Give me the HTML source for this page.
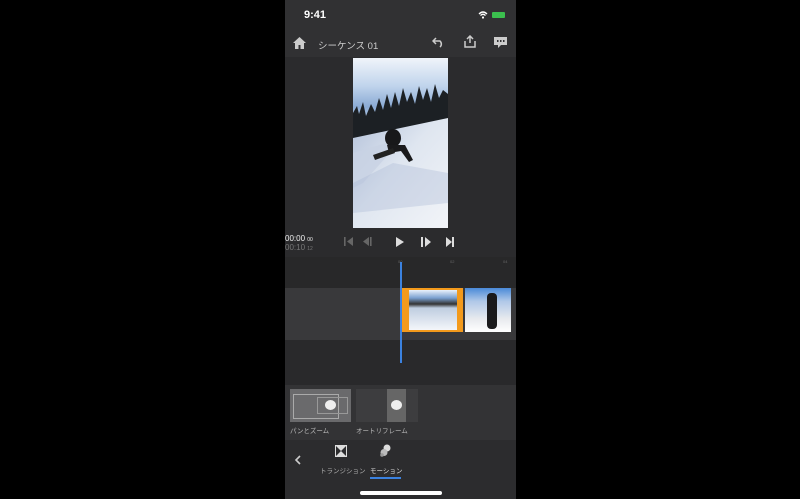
<!DOCTYPE html>
<html><head><meta charset="utf-8"><style>
body{margin:0;width:800px;height:499px;background:#000;position:relative;overflow:hidden;font-family:"Liberation Sans","Noto Sans CJK JP",sans-serif;}
.ph{position:absolute;left:285px;top:0;width:231px;height:499px;background:#2b2b2d;overflow:hidden;}
.a{position:absolute;}
.t{color:#ddd;font-size:8px;white-space:nowrap;}
</style></head><body>
<div class="ph">
 <div class="a" style="left:0;top:0;width:231px;height:57px;background:#313133"></div>
 <div class="a t" style="left:19px;top:9px;font-size:11px;font-weight:bold;color:#fff">9:41</div>
 <svg class="a" style="left:193px;top:11px" width="10" height="8" viewBox="0 0 10 8"><path d="M1 3Q5 -1 9 3M2.5 4.5Q5 2 7.5 4.5" stroke="#fff" stroke-width="1.3" fill="none"/><circle cx="5" cy="6.5" r="1.1" fill="#fff"/></svg>
 <div class="a" style="left:207px;top:12px;width:13px;height:6px;background:#3bbf4e;border-radius:1px"></div>
 <svg class="a" style="left:8px;top:37px" width="13" height="12" viewBox="0 0 13 12"><path d="M6.5 0L0 6h2v6h3.5V8h2v4H11V6h2z" fill="#ccc"/></svg>
 <div class="a t" style="left:33px;top:38px;font-size:9.5px;color:#ccc">シーケンス 01</div>
 <svg class="a" style="left:147px;top:37px" width="14" height="13" viewBox="0 0 14 13"><path d="M4 1L1 4l3 3M1 4h7a4 4 0 0 1 0 6" stroke="#ccc" stroke-width="1.5" fill="none"/></svg>
 <svg class="a" style="left:179px;top:35px" width="12" height="13" viewBox="0 0 12 13"><path d="M6 8V1M3 4l3-3 3 3M1 6v6h10V6" stroke="#ccc" stroke-width="1.5" fill="none"/></svg>
 <svg class="a" style="left:209px;top:37px" width="13" height="11" viewBox="0 0 13 11"><path d="M0 0h13v8H7l-3 3V8H0z" fill="#ccc"/><rect x="3" y="3" width="1.5" height="2" fill="#313133"/><rect x="6" y="3" width="1.5" height="2" fill="#313133"/><rect x="9" y="3" width="1.5" height="2" fill="#313133"/></svg>
 <svg class="a" style="left:68px;top:58px" width="95" height="170" viewBox="0 0 95 170">
  <defs>
   <linearGradient id="sky" x1="0" y1="0" x2="0" y2="1"><stop offset="0" stop-color="#f0f4fa"/><stop offset=".4" stop-color="#c0d4ec"/><stop offset=".7" stop-color="#8aaad4"/><stop offset="1" stop-color="#d4e0ee"/></linearGradient>
   <linearGradient id="snow" x1="0" y1="0" x2="1" y2="1"><stop offset="0" stop-color="#b4c2da"/><stop offset=".45" stop-color="#dfe6f0"/><stop offset="1" stop-color="#f2f4f8"/></linearGradient>
  </defs>
  <rect width="95" height="70" fill="url(#sky)"/>
  <path d="M0 55 L4 48 L6 56 L10 44 L13 58 L18 46 L22 54 L26 40 L30 52 L34 36 L38 50 L42 34 L46 48 L50 30 L54 44 L58 34 L62 46 L66 28 L70 42 L74 30 L78 44 L82 26 L86 40 L90 32 L95 36 L95 70 L0 90Z" fill="#1c2024"/>
  <path d="M0 80 L95 60 L95 170 L0 170Z" fill="url(#snow)"/>
  <path d="M0 95 L50 80 L10 125 L0 130Z" fill="#c8d2e4" opacity=".8"/>
  <path d="M0 125 L40 105 L95 115 L95 145 L0 155Z" fill="#a8b8d4" opacity=".35"/>
  <ellipse cx="40" cy="80" rx="8" ry="9" fill="#18181a"/>
  <path d="M34 87 L52 87 L60 102 L56 104 L48 93 L36 95Z" fill="#1a1a1c"/>
  <path d="M20 97 L40 90 L42 95 L22 102Z" fill="#222"/>
 </svg>
 <div class="a t" style="left:0;top:234px;color:#eee">00:00 <span style="font-size:5px">00</span></div>
 <div class="a t" style="left:0;top:243px;color:#777">00:10 <span style="font-size:5px">12</span></div>
 <svg class="a" style="left:58px;top:236px" width="120" height="12" viewBox="0 0 120 12">
  <g fill="#666"><rect x="1" y="1" width="1.6" height="9"/><path d="M10 1v9L4 5.5z"/><rect x="27" y="1" width="1.6" height="9"/><path d="M26 1v9L20 5.5z"/></g>
  <g fill="#ddd"><path d="M53 1v10l8-5z"/><rect x="78" y="1" width="2" height="10"/><path d="M82 1v10l6-5z"/><path d="M103 1v10l6-5z"/><rect x="109" y="1" width="2" height="10"/></g>
 </svg>
 <div class="a" style="left:0;top:257px;width:231px;height:31px;background:#282829"></div>
 <div class="a t" style="left:113px;top:259px;font-size:4px;color:#666">00</div>
 <div class="a t" style="left:165px;top:259px;font-size:4px;color:#666">02</div>
 <div class="a t" style="left:218px;top:259px;font-size:4px;color:#666">04</div>
 <div class="a" style="left:0;top:288px;width:231px;height:52px;background:#39393b"></div>
 <div class="a" style="left:0;top:340px;width:231px;height:45px;background:#29292b"></div>
 <div class="a" style="left:116px;top:288px;width:62px;height:44px;background:#f39a1c"></div>
 <div class="a" style="left:124px;top:290px;width:48px;height:40px;background:linear-gradient(180deg,#eaf2fc 0%,#7aa0d0 20%,#333 35%,#bfcde0 45%,#f4f6fa 100%)"></div>
 <div class="a" style="left:180px;top:288px;width:46px;height:44px;background:linear-gradient(180deg,#4a8ad8 0%,#b0c8e8 30%,#e8eaee 70%,#fff 100%)"></div>
 <div class="a" style="left:202px;top:293px;width:10px;height:36px;background:#1a1a1c;border-radius:4px"></div>
 <div class="a" style="left:115px;top:262px;width:1.5px;height:101px;background:#3b82e0"></div>
 <div class="a" style="left:0;top:385px;width:231px;height:55px;background:#333335"></div>
 <div class="a" style="left:5px;top:389px;width:61px;height:33px;background:#6a6a6c"></div>
 <div class="a" style="left:8px;top:394px;width:46px;height:25px;border:1px solid #aaa;box-sizing:border-box"></div>
 <div class="a" style="left:32px;top:397px;width:31px;height:17px;border:1px solid #999;box-sizing:border-box"></div>
 <div class="a" style="left:40px;top:400px;width:11px;height:10px;background:#eee;border-radius:50%"></div>
 <div class="a t" style="left:5px;top:425px;font-size:6.5px;color:#bbb">パンとズーム</div>
 <div class="a" style="left:71px;top:389px;width:62px;height:33px;background:#3d3d3f"></div>
 <div class="a" style="left:102px;top:389px;width:19px;height:33px;background:#666"></div>
 <div class="a" style="left:106px;top:400px;width:11px;height:10px;background:#eee;border-radius:50%"></div>
 <div class="a t" style="left:71px;top:425px;font-size:6.5px;color:#bbb">オートリフレーム</div>
 <div class="a" style="left:0;top:440px;width:231px;height:59px;background:#2c2c2e"></div>
 <svg class="a" style="left:9px;top:455px" width="7" height="10" viewBox="0 0 7 10"><path d="M6 1L2 5l4 4" stroke="#ccc" stroke-width="1.6" fill="none"/></svg>
 <svg class="a" style="left:50px;top:445px" width="12" height="12" viewBox="0 0 12 12"><rect x=".5" y=".5" width="11" height="11" fill="none" stroke="#ddd"/><path d="M1 1h10L6 6zM1 11h10L6 6z" fill="#ddd"/></svg>
 <div class="a t" style="left:35px;top:465px;font-size:6.5px;color:#aaa">トランジション</div>
 <svg class="a" style="left:94px;top:444px" width="13" height="13" viewBox="0 0 13 13"><circle cx="8" cy="4" r="3.5" fill="#ddd"/><circle cx="5" cy="8.5" r="3.5" fill="#bbb"/><circle cx="3" cy="11" r="1.8" fill="#999"/></svg>
 <div class="a t" style="left:85px;top:465px;font-size:6.5px;color:#ddd">モーション</div>
 <div class="a" style="left:85px;top:477px;width:31px;height:1.5px;background:#3b82e0"></div>
 <div class="a" style="left:75px;top:491px;width:82px;height:4px;background:#fff;border-radius:2px"></div>
</div>
</body></html>
